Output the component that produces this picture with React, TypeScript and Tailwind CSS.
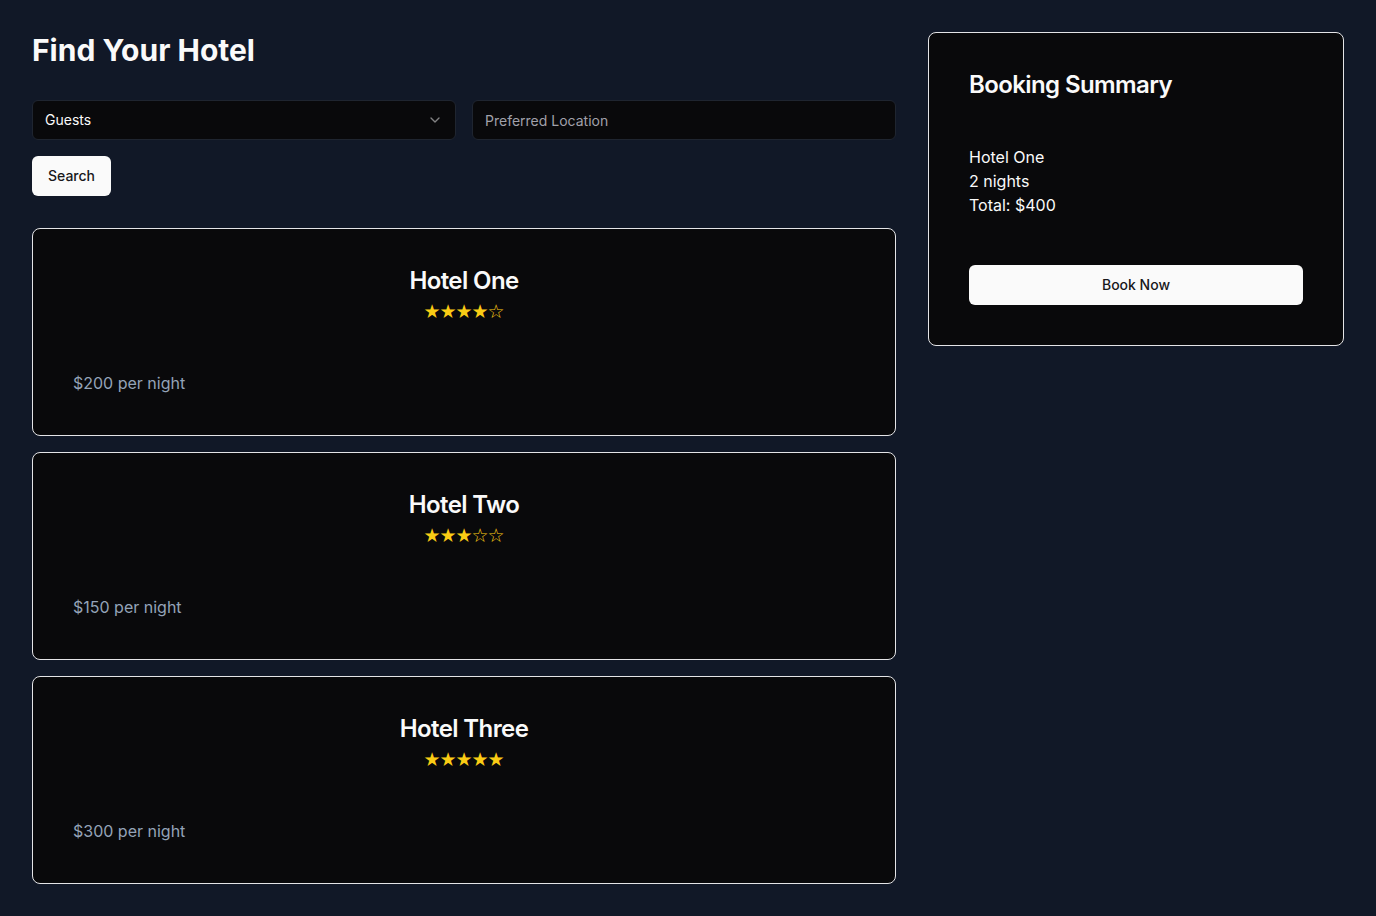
import React from "react";
import { ChevronDown } from "lucide-react";

const hotels = [
  { name: "Hotel One", rating: 4, price: 200 },
  { name: "Hotel Two", rating: 3, price: 150 },
  { name: "Hotel Three", rating: 5, price: 300 },
];

function Stars({ rating }: { rating: number }) {
  return (
    <div
      className="mt-1.5 flex h-6 items-center justify-center text-[19px] text-[#facc15]"
      style={{ fontFamily: "'DejaVu Sans', sans-serif" }}
    >
      {[0, 1, 2, 3, 4].map((i) => (
        <span key={i} className="flex w-4 justify-center leading-6">
          {i < rating ? "★" : "☆"}
        </span>
      ))}
    </div>
  );
}

export default function App() {
  return (
    <div
      className="min-h-screen bg-[#111827] p-8 text-[#fafafa]"
      style={{ fontFamily: "Inter, 'Noto Sans', sans-serif" }}
    >
      <div className="grid grid-cols-3 gap-8">
        <div className="col-span-2">
          <h1 className="mb-8 text-3xl font-bold">Find Your Hotel</h1>
          <div className="grid grid-cols-2 gap-4">
            <button className="flex h-10 w-full items-center justify-between rounded-md border border-[#1f2530] bg-[#09090b] px-3 text-sm text-[#fafafa]">
              <span>Guests</span>
              <ChevronDown size={16} className="opacity-50" />
            </button>
            <div className="flex h-10 items-center rounded-md border border-[#1f2530] bg-[#09090b] px-3 pt-0.5 text-sm text-[#a1a1aa]">
              Preferred Location
            </div>
          </div>
          <button className="mt-4 h-10 rounded-md bg-[#fafafa] px-4 text-sm font-medium text-[#18181b]">
            Search
          </button>
          <div className="mt-8 flex flex-col gap-4">
            {hotels.map((h) => (
              <div
                key={h.name}
                className="rounded-lg border border-[#e4e4e7] bg-[#09090b] p-10"
              >
                <h2 className="text-center text-2xl font-semibold leading-none tracking-tight">
                  {h.name}
                </h2>
                <Stars rating={h.rating} />
                <p className="mt-12 leading-6 text-[#94a3b8]">
                  ${h.price} per night
                </p>
              </div>
            ))}
          </div>
        </div>
        <div>
          <div className="rounded-lg border border-[#e4e4e7] bg-[#09090b] p-10">
            <h2 className="text-2xl font-semibold leading-none tracking-tight">
              Booking Summary
            </h2>
            <div className="mt-12 leading-6">
              <p>Hotel One</p>
              <p>2 nights</p>
              <p>Total: $400</p>
            </div>
            <button className="mt-12 h-10 w-full rounded-md bg-[#fafafa] text-sm font-medium text-[#18181b]">
              Book Now
            </button>
          </div>
        </div>
      </div>
    </div>
  );
}
